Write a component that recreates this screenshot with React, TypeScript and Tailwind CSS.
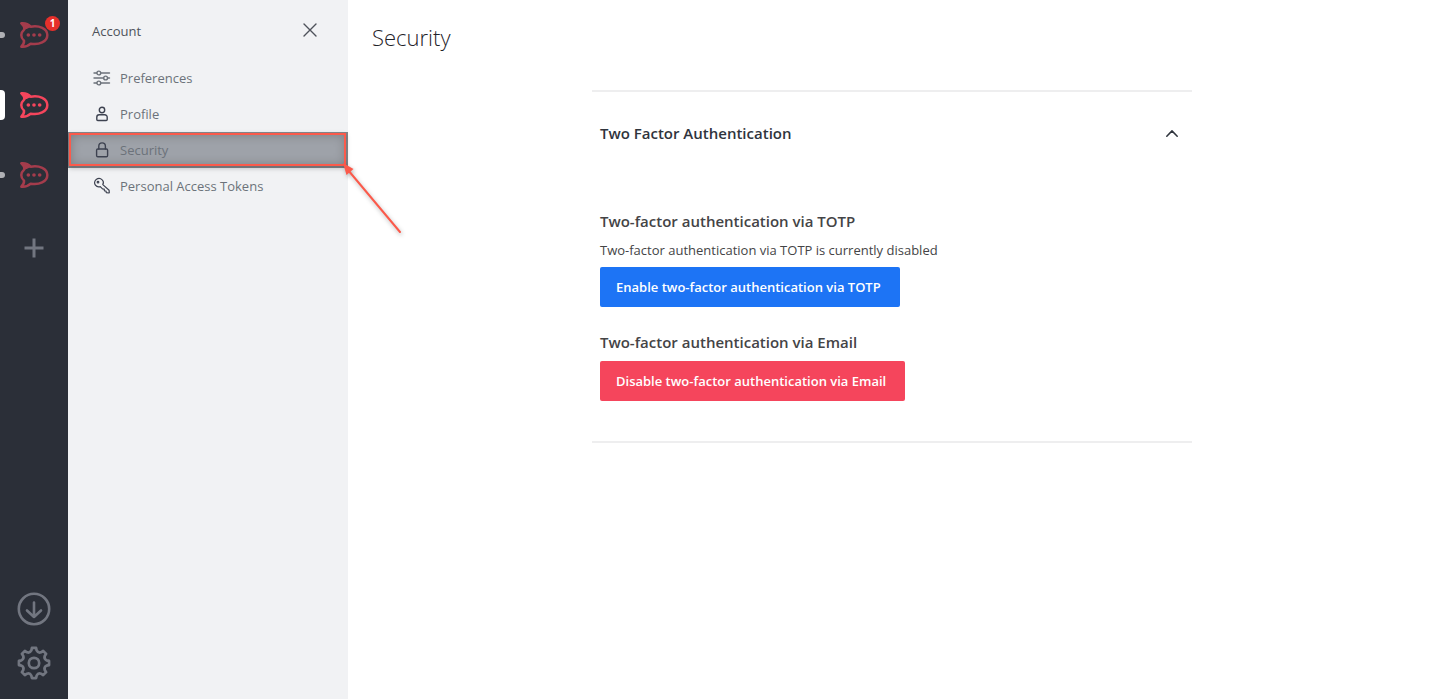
import type { ReactNode } from 'react';

type Server = { name: string; active?: boolean; badge?: number };

const servers: Server[] = [
  { name: 'Workspace one', badge: 1 },
  { name: 'Workspace two', active: true },
  { name: 'Workspace three' },
];

const line = {
  fill: 'none',
  stroke: 'currentColor',
  strokeLinecap: 'round' as const,
  strokeLinejoin: 'round' as const,
};

function gearPath() {
  const c = 17;
  const pt = (r: number, deg: number) => {
    const a = ((deg - 90) * Math.PI) / 180;
    return `${(c + r * Math.cos(a)).toFixed(2)} ${(c + r * Math.sin(a)).toFixed(2)}`;
  };
  let d = '';
  for (let i = 0; i < 8; i++) {
    const a = i * 45;
    d += `${i ? 'L' : 'M'}${pt(15.2, a - 8)} L${pt(15.2, a + 8)} L${pt(12.8, a + 12)} Q${pt(10.6, a + 22.5)} ${pt(12.8, a + 33)} `;
  }
  return d + 'Z';
}

function GearIcon() {
  return (
    <svg viewBox="0 0 34 34" className="size-[34px]" {...line} strokeWidth={2.7}>
      <path d={gearPath()} />
      <circle cx="17" cy="17" r="5.2" />
    </svg>
  );
}

function DownloadIcon() {
  return (
    <svg viewBox="0 0 34 34" className="size-[34px]" {...line} strokeWidth={2.6}>
      <circle cx="17" cy="17" r="15.2" />
      <path d="M17 10.5V25M10 18.5l7 6.5 7-6.5" />
    </svg>
  );
}

function ChatLogo() {
  return (
    <svg viewBox="0 0 90 90" className="size-[30px]" {...line} strokeWidth={7.5}>
      <path d="M7 10C20 9 29 13 35 20 61 15 85 26 85 45 85 65 60 76 35 71 28 78 18 81 7 80 13 74 16 68 15 62 4 52 4 39 16 28 16 21 13 15 7 10Z" />
      <path d="M7 10C20 9 29 13 35 20L19 27C16 21 13 15 7 10Z" fill="currentColor" strokeWidth={3} />
      <g fill="currentColor" stroke="none">
        <circle cx="28" cy="45" r="5.5" />
        <circle cx="45" cy="45" r="5.5" />
        <circle cx="62" cy="45" r="5.5" />
      </g>
    </svg>
  );
}

function SlidersIcon() {
  return (
    <svg viewBox="0 0 20 20" className="size-5" {...line} strokeWidth={1.4}>
      <path d="M2 5h2.8M8.8 5H17.5M2 10h9.6M15.6 10H17.5M2 15h2.8M8.8 15H17.5" />
      <circle cx="6.8" cy="5" r="1.9" />
      <circle cx="13.6" cy="10" r="1.9" />
      <circle cx="6.8" cy="15" r="1.9" />
    </svg>
  );
}

function UserIcon() {
  return (
    <svg viewBox="0 0 20 20" className="size-5" {...line} strokeWidth={1.4}>
      <circle cx="10" cy="6" r="2.7" />
      <path d="M7.2 10.8h5.6a2.4 2.4 0 0 1 2.4 2.4v2.3a1 1 0 0 1-1 1H5.8a1 1 0 0 1-1-1v-2.3a2.4 2.4 0 0 1 2.4-2.4Z" />
    </svg>
  );
}

function LockIcon() {
  return (
    <svg viewBox="0 0 20 20" className="size-5" {...line} strokeWidth={1.4}>
      <rect x="4.6" y="9" width="11" height="7.8" rx="1.2" />
      <path d="M6.8 9V6.2a3.3 3.3 0 0 1 6.6 0V9" />
    </svg>
  );
}

function KeyIcon() {
  return (
    <svg viewBox="0 0 20 20" className="size-5" {...line} strokeWidth={1.2}>
      <path d="M10.8 8.6c.8-1.5.7-3.5-.6-4.7C8.6 2.3 6 2.2 4.2 3.5 2.3 4.9 2.1 7.5 3.4 9.2c1.2 1.5 3.2 2 4.9 1.4l2.2 2.3 1.7.2.2 1.7 1.6.2.3 1.6 2.6.4.4-.4-.2-2.3Z" />
      <circle cx="6" cy="6.2" r=".8" />
    </svg>
  );
}

const menu: { label: string; icon: ReactNode; active?: boolean }[] = [
  { label: 'Preferences', icon: <SlidersIcon /> },
  { label: 'Profile', icon: <UserIcon /> },
  { label: 'Security', icon: <LockIcon />, active: true },
  { label: 'Personal Access Tokens', icon: <KeyIcon /> },
];

function Pointer() {
  return (
    <svg
      viewBox="0 0 70 80"
      className="pointer-events-none absolute top-full left-full -mt-2 -ml-2 h-20 w-[70px] text-[#fb5a4b] drop-shadow-[1px_2px_2px_rgba(0,0,0,0.3)]"
      aria-hidden="true"
    >
      <path d="M8 10 60 72" fill="none" stroke="currentColor" strokeWidth="2" strokeLinecap="round" />
      <path d="M3 3 13.5 9 6.5 15Z" fill="currentColor" />
    </svg>
  );
}

function ServerRail() {
  return (
    <nav aria-label="Servers" className="flex w-[68px] shrink-0 flex-col bg-[#2b2f38] text-[#727680]">
      {servers.map((s) => (
        <button key={s.name} aria-label={s.name} className="relative flex h-[70px] items-center justify-center">
          <span
            className={
              s.active
                ? 'absolute left-0 h-[30px] w-[5px] rounded-r-sm bg-white'
                : 'absolute left-0 h-1.5 w-[5px] rounded-r-full bg-[#b0b1b5]'
            }
          />
          <span className={s.active ? 'text-[#f5455c]' : 'text-[#a43c4c]'}>
            <ChatLogo />
          </span>
          {s.badge && (
            <span className="absolute top-4 right-2 flex size-[15px] items-center justify-center rounded-full bg-[#e6302b] font-['Open_Sans',sans-serif] text-[10px] font-bold text-white">
              {s.badge}
            </span>
          )}
        </button>
      ))}
      <button aria-label="Add server" className="flex h-[76px] items-center justify-center">
        <svg viewBox="0 0 20 20" className="size-5" fill="none" stroke="currentColor" strokeWidth={3}>
          <path d="M10 .5v19M.5 10h19" />
        </svg>
      </button>
      <div className="mt-auto flex flex-col pb-[9px]">
        <button aria-label="Downloads" className="flex h-[54px] items-center justify-center">
          <DownloadIcon />
        </button>
        <button aria-label="Settings" className="flex h-[54px] items-center justify-center">
          <GearIcon />
        </button>
      </div>
    </nav>
  );
}

function AccountMenu() {
  return (
    <aside className="w-[280px] shrink-0 bg-[#f1f2f4] text-[13px]">
      <header className="flex h-[60px] items-center justify-between pr-8 pl-6 text-[#4e525a]">
        <h2 className="pt-1">Account</h2>
        <button aria-label="Close" className="flex size-3">
          <svg viewBox="0 0 12 12" className="size-3 overflow-visible" {...line} strokeWidth={1.4}>
            <path d="M0 0l12 12M12 0 0 12" />
          </svg>
        </button>
      </header>
      <ul>
        {menu.map((m) => (
          <li key={m.label} className="relative">
            <a
              href="#"
              aria-current={m.active ? 'page' : undefined}
              className={
                m.active
                  ? 'flex h-9 items-center gap-2 bg-[#9ea2a9] pl-6 text-[#6c727a] shadow-[inset_0_0_10px_4px_#808388]'
                  : 'flex h-9 items-center gap-2 pl-6 text-[#6c727a]'
              }
            >
              <span className={m.label === 'Preferences' ? 'text-[#6c727a]' : 'text-[#3d4250]'}>{m.icon}</span>
              <span className="pt-0.5">{m.label}</span>
            </a>
            {m.active && (
              <>
                <span className="pointer-events-none absolute top-px right-0.5 bottom-0.5 left-px border-2 border-[#fb5a4b] shadow-[0_2px_5px_rgba(0,0,0,0.25)]" />
                <Pointer />
              </>
            )}
          </li>
        ))}
      </ul>
    </aside>
  );
}

export default function App() {
  return (
    <div className="flex min-h-screen bg-white font-['Open_Sans','Noto_Sans',sans-serif]">
      <ServerRail />
      <AccountMenu />
      <main className="min-w-0 flex-1">
        <h1 className="flex h-[74px] items-center px-6 text-[22px] font-light text-[#1f2329]">Security</h1>
        <div className="px-6 pt-4">
          <section className="mx-auto max-w-[600px] border-y-2 border-[#eeeeef] pb-10">
            <button
              aria-expanded="true"
              className="flex h-[82px] w-full items-center justify-between pr-3.5 pl-2 text-[15px] font-semibold text-[#2f343d]"
            >
              Two Factor Authentication
              <svg viewBox="0 0 12 7" className="h-[7px] w-3" {...line} strokeWidth={1.5}>
                <path d="M.8 6.2 6 .9l5.2 5.3" />
              </svg>
            </button>
            <div className="px-2 pt-[33px] text-[#444446]">
              <h3 className="text-[15px] leading-7 font-semibold">Two-factor authentication via TOTP</h3>
              <p className="pt-1 pb-1.5 text-[13px] leading-[22px]">Two-factor authentication via TOTP is currently disabled</p>
              <button className="h-10 rounded-xs bg-[#1d74f5] pt-0.5 pr-[19px] pl-4 text-[13px] font-semibold text-white">
                Enable two-factor authentication via TOTP
              </button>
              <h3 className="mt-5 pb-1 text-[15px] leading-[30px] font-semibold">Two-factor authentication via Email</h3>
              <button className="h-10 rounded-xs bg-[#f5455c] pt-0.5 pr-[19px] pl-4 text-[13px] font-semibold text-white">
                Disable two-factor authentication via Email
              </button>
            </div>
          </section>
        </div>
      </main>
    </div>
  );
}
